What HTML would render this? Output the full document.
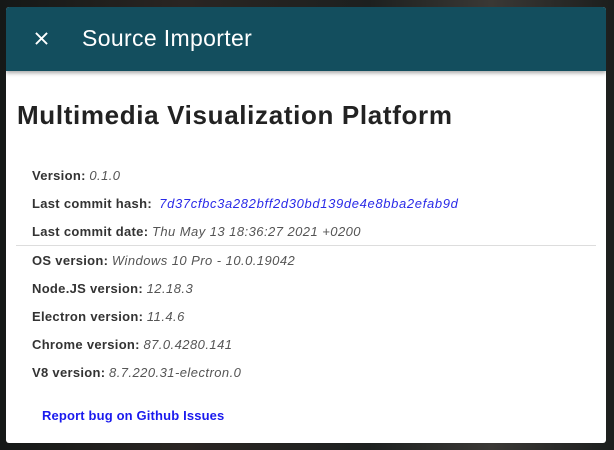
<!DOCTYPE html>
<html><head><meta charset="utf-8"><style>
body{margin:0;width:614px;height:450px;overflow:hidden;background:#1a1d1c;font-family:"Liberation Sans",sans-serif;position:relative}
.bg{position:absolute;inset:0;background:linear-gradient(90deg,#151817,#2a2522 30%,#1d201f 60%,#3a3835 80%,#1c1e1d)}
.dlg{position:absolute;left:6px;top:7px;width:600px;height:436px;background:#fff;border-radius:3px;overflow:hidden}
.hdr{height:64px;background:#134e5e;color:#fff;box-shadow:0 2px 4px rgba(0,0,0,.35);position:relative}
.hdr .t{position:absolute;left:76px;top:18px;font-size:23px;letter-spacing:0.35px}
.hdr svg{position:absolute;left:29px;top:25px}
h1{position:absolute;left:11px;top:93px;margin:0;font-size:26px;font-weight:bold;color:#222;letter-spacing:0.65px}
.r{position:absolute;left:26px;font-size:13px;color:#333;white-space:nowrap}
.r b{font-weight:bold;color:#333;letter-spacing:0.3px}
.r i{color:#555;letter-spacing:0.45px}
.r i.hash{color:#2a2ae8;letter-spacing:0.65px}
.hr{position:absolute;left:10px;width:580px;top:238px;height:1px;background:#ddd}
.link{position:absolute;left:36px;top:401px;font-size:13px;font-weight:bold;color:#1a1aee;letter-spacing:0.15px}
</style></head><body><div class="bg"></div>
<div class="dlg">
<div class="hdr"><svg width="13" height="13" viewBox="0 0 14 14"><path d="M1 1L13 13M13 1L1 13" stroke="#fff" stroke-width="2"/></svg><span class="t">Source Importer</span></div>
<h1>Multimedia Visualization Platform</h1>
<div class="r" style="top:161px"><b>Version:</b> <i>0.1.0</i></div>
<div class="r" style="top:189px"><b>Last commit hash:</b> &nbsp;<i class="hash">7d37cfbc3a282bff2d30bd139de4e8bba2efab9d</i></div>
<div class="r" style="top:217px"><b>Last commit date:</b> <i>Thu May 13 18:36:27 2021 +0200</i></div>
<div class="hr"></div>
<div class="r" style="top:246px"><b>OS version:</b> <i>Windows 10 Pro - 10.0.19042</i></div>
<div class="r" style="top:274px"><b>Node.JS version:</b> <i>12.18.3</i></div>
<div class="r" style="top:302px"><b>Electron version:</b> <i>11.4.6</i></div>
<div class="r" style="top:330px"><b>Chrome version:</b> <i>87.0.4280.141</i></div>
<div class="r" style="top:358px"><b>V8 version:</b> <i>8.7.220.31-electron.0</i></div>
<div class="link">Report bug on Github Issues</div>
</div></body></html>
